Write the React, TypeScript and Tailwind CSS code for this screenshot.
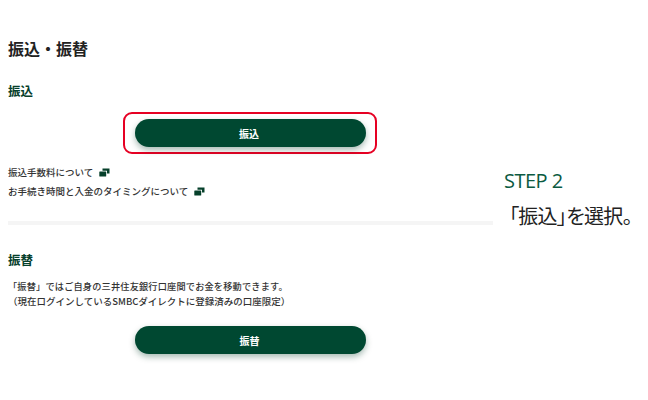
const jp = "font-['Noto_Sans_CJK_JP','Noto_Sans',sans-serif]";

function ExternalIcon() {
  return (
    <svg viewBox="0 0 11 9" className="ml-[6px] h-[9px] w-[11px]" fill="#06402b">
      <path d="M3.5 0.5 H10.5 V5.5 H8 V2.8 H3.5 Z" />
      <rect x="0.3" y="3.4" width="6.9" height="5.2" rx="0.5" />
    </svg>
  );
}

function ActionButton({ label }: { label: string }) {
  return (
    <button className="flex h-[28px] w-[231px] items-center justify-center rounded-full bg-[#004831] pr-[2px] text-[10px] font-bold text-white shadow-[0_3px_6px_rgba(0,60,40,0.35)]">
      {label}
    </button>
  );
}

export default function App() {
  return (
    <div className={`flex h-[400px] w-[648px] bg-white ${jp}`}>
      {/* Left: bank screen */}
      <div className="ml-2 w-[485px] shrink-0">
        <h1 className="mt-[38px] text-[16px] leading-[20px] font-bold text-[#222]">振込・振替</h1>

        <h2 className="mt-[24px] text-[12.5px] leading-[18px] font-bold text-[#06402b]">振込</h2>
        <div className="mt-[12px] flex justify-center pr-[1px]">
          <div className="rounded-[9px] border-2 border-[#e60023] px-[9.5px] py-[5px]">
            <ActionButton label="振込" />
          </div>
        </div>

        <ul className="mt-[10px] text-[9.5px] leading-[16px] font-medium text-[#333]">
          <li className="flex items-center">
            振込手数料について
            <ExternalIcon />
          </li>
          <li className="mt-[3px] flex items-center">
            お手続き時間と入金のタイミングについて
            <ExternalIcon />
          </li>
        </ul>

        <div className="mt-[22px] h-[4px] bg-[#f5f5f5]" />

        <h2 className="mt-[26px] text-[12.5px] leading-[18px] font-bold text-[#06402b]">振替</h2>
        <p className="mt-[10px] text-[9.5px] leading-[15px] font-medium whitespace-nowrap text-[#333]">
          <span className="text-[9.2px] tracking-[0.17px]">「振替」ではご自身の三井住友銀行口座間でお金を移動できます。</span>
          <br />
          （現在ログインしているSMBCダイレクトに登録済みの口座限定）
        </p>
        <div className="mt-[17px] flex justify-center">
          <ActionButton label="振替" />
        </div>
      </div>

      {/* Right: step caption */}
      <div className="ml-[11px] pt-[168px]">
        <p className="text-[20px] leading-[26px] tracking-[-0.5px] text-[#0b5a41] font-['Open_Sans',sans-serif]">STEP 2</p>
        <p className="mt-[9px] ml-[5px] text-[20px] leading-[26px] tracking-[-0.7px] whitespace-nowrap text-[#222] [font-feature-settings:'palt']">「振込」を選択。</p>
      </div>
    </div>
  );
}
